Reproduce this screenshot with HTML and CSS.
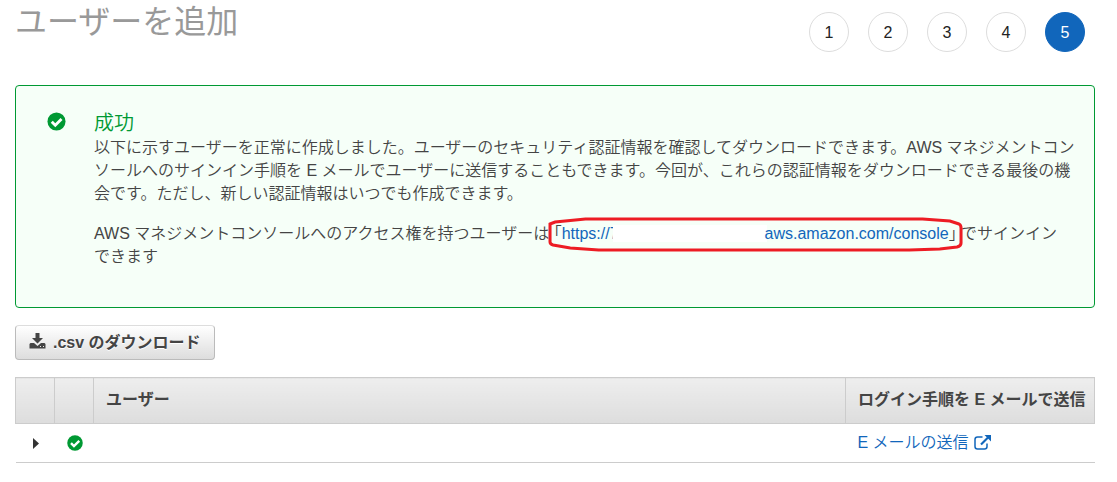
FILE: index.html
```
<!DOCTYPE html>
<html lang="ja">
<head>
<meta charset="utf-8">
<title>ユーザーを追加</title>
<link rel="stylesheet" href="styles.css">
</head>
<body>
<main class="page">
  <header class="head">
    <h1 class="title">ユーザーを追加</h1>
    <ol class="steps">
      <li class="step">1</li>
      <li class="step">2</li>
      <li class="step">3</li>
      <li class="step">4</li>
      <li class="step current" aria-current="step">5</li>
    </ol>
  </header>

  <section class="notice">
    <svg class="notice-icon" viewBox="0 0 20 20" aria-hidden="true"><circle cx="10" cy="10" r="9.5" fill="#093"/><path d="M5 10.2l3.7 3.7L15.3 7.3" fill="none" stroke="#fff" stroke-width="3"/></svg>
    <div>
      <h2 class="notice-title">成功</h2>
      <p class="text">以下に示すユーザーを正常に作成しました。ユーザーのセキュリティ認証情報を確認してダウンロードできます。AWS マネジメントコンソールへのサインイン手順を E メールでユーザーに送信することもできます。今回が、これらの認証情報をダウンロードできる最後の機会です。ただし、新しい認証情報はいつでも作成できます。</p>
      <p class="text">AWS マネジメントコンソールへのアクセス権を持つユーザーは <span class="marked"><span class="bracket">「</span><a class="link" href="#">https://7<span class="redacted"></span>aws.amazon.com/console</a><span class="bracket">」</span><svg class="ring" viewBox="0 0 410 35" preserveAspectRatio="none" aria-hidden="true"><path d="M2 7L7 5L37 2H370L397 4L406 7Q408 8 408 11V26Q408 29 404 30L387 32L357 33H50L22 31L5 28Q2 27 2 25Z"/></svg></span> でサインイン<span class="keep">できます</span></p>
    </div>
  </section>

  <button class="download" type="button">
    <svg class="download-icon" viewBox="0 0 17 16" aria-hidden="true"><path fill="#444" d="M6.5 0h4v5H14L8.500 10.500 3 5h3.500zM1.500 10H5l3.500 3 3.500-3h3.500l1 1v4.500H.5V11z"/><path fill="#eee" d="M11 13h1v1h-1zM14 13h1v1h-1z"/></svg>
    <span>.csv のダウンロード</span>
  </button>

  <table class="users">
    <colgroup><col class="col-icon"><col class="col-icon"><col><col class="col-mail"></colgroup>
    <thead>
      <tr><th></th><th></th><th>ユーザー</th><th>ログイン手順を E メールで送信</th></tr>
    </thead>
    <tbody>
      <tr>
        <td class="cell-icon"><button class="expand" type="button" aria-label="詳細"><svg class="caret" viewBox="0 0 6 11"><path d="M0 0L6 5.5 0 11z" fill="#333"/></svg></button></td>
        <td class="cell-icon"><svg class="ok" viewBox="0 0 20 20" aria-hidden="true"><circle cx="10" cy="10" r="9.7" fill="#093"/><path d="M5 10.2l3.7 3.7L15.3 7.3" fill="none" stroke="#fff" stroke-width="3"/></svg></td>
        <td></td>
        <td><a class="link send" href="#">E メールの送信<svg class="external" viewBox="0 0 17 15" aria-hidden="true"><path d="M8.500 2H3.500Q1 2 1 4.500V11.500Q1 14 3.500 14H10.500Q13 14 13 11.500V8.500" fill="none" stroke="#1166bb" stroke-width="1.5"/><path d="M7 9.500L14 2.500" stroke="#1166bb" stroke-width="2.2"/><path d="M10.500 0H17V6.500z" fill="#1166bb"/></svg></a></td>
      </tr>
    </tbody>
  </table>
</main>
</body>
</html>
```
FILE: styles.css
```
* { box-sizing: border-box; }
body {
  margin: 0;
  background: #fff;
  color: #444;
  font: 16px/23px "Liberation Sans", "Noto Sans CJK JP", sans-serif;
}
.page { padding: 0 22px 19px 15px; }
.head {
  display: flex;
  justify-content: space-between;
  align-items: flex-start;
  height: 85px;
}
.title {
  margin: 0;
  font-size: 32px;
  line-height: 44px;
  font-weight: 400;
  color: #999;
}
.steps {
  display: flex;
  gap: 19px;
  margin: 0;
  padding: 12px 10px 0 0;
  list-style: none;
}
.step {
  width: 40px;
  height: 40px;
  border: 1px solid #ddd;
  border-radius: 50%;
  line-height: 39px;
  text-align: center;
  color: #222;
}
.current { background: #16b; border-color: #16b; color: #fff; }
.notice {
  display: flex;
  gap: 28px;
  padding: 25px 12px 22px 31px;
  border: 1px solid #093;
  border-radius: 4px;
  background: #f6fff8;
}
.notice-icon { flex: none; width: 19px; height: 19px; margin-top: 1px; }
.notice-title {
  margin: 0;
  font-size: 20px;
  line-height: 25px;
  font-weight: 350;
  color: #093;
}
.text { margin: 0 0 17px; font-weight: 350; }
.link { color: #16b; text-decoration: none; }
.marked { position: relative; white-space: nowrap; }
.keep { display: inline-block; }
.bracket { font-feature-settings: "halt"; }
.redacted {
  display: inline-block;
  width: 154px;
  height: 17px;
  margin: 0 -2px 0 -6px;
  background: #fff;
  vertical-align: -3px;
}
.ring {
  position: absolute;
  left: -6px;
  top: -8px;
  width: calc(100% + 12px);
  height: 35px;
  fill: none;
  stroke: #ed1c24;
  stroke-width: 3px;
}
.download {
  display: flex;
  align-items: center;
  gap: 7px;
  height: 35px;
  margin: 17px 0;
  padding: 0 13px;
  border: 1px solid #bbb;
  border-top-color: #ddd;
  border-radius: 4px;
  background: linear-gradient(#fff, #ddd);
  color: #444;
  font: inherit;
  font-weight: bold;
  text-shadow: 0 1px 0 #fff;
}
.download-icon { width: 17px; height: 16px; margin-bottom: 4px; }
.users {
  width: 100%;
  table-layout: fixed;
  border-collapse: collapse;
}
.col-icon { width: 39px; }
.col-mail { width: 249px; }
th {
  height: 46px;
  padding: 0 0 2px 12px;
  border: 1px solid #ccc;
  background: linear-gradient(#eee, #ddd);
  text-align: left;
  white-space: nowrap;
}
td {
  height: 39px;
  padding: 0 0 2px 12px;
  border-bottom: 1px solid #ccc;
  font-weight: 350;
}
.cell-icon { padding: 0 0 0 2px; text-align: center; }
.expand { display: block; margin: 0 auto; padding: 0 4px; border: 0; background: none; }
.caret { display: block; width: 6px; height: 11px; }
.ok { display: block; width: 16px; height: 16px; margin: 0 auto; }
.send { display: inline-flex; align-items: center; gap: 5px; }
.external { width: 17px; height: 15px; }
```
